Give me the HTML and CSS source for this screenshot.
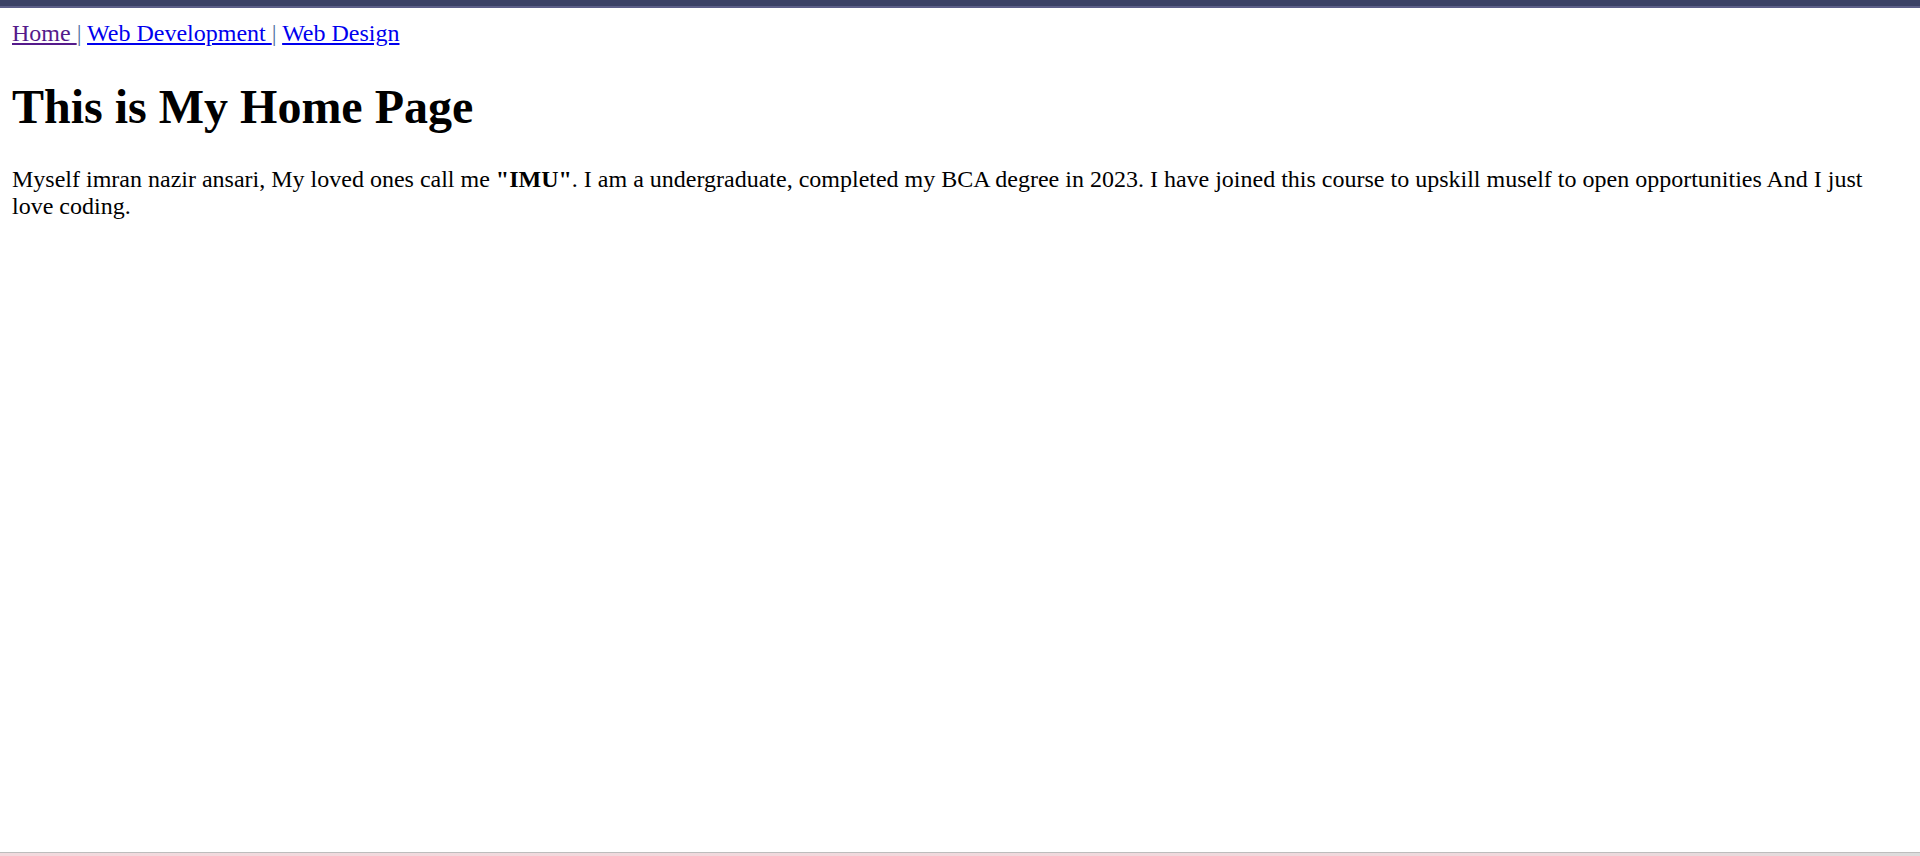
FILE: index.html
```html
<!DOCTYPE html>
<html lang="en">
<head>
<meta charset="utf-8">
<title>My Home Page</title>
<link rel="stylesheet" href="styles.css">
</head>
<body>
<div class="topbar"></div>
<main class="page">
  <nav class="nav"><a class="visited" href="#">Home </a><span class="sep">|</span> <a href="#">Web Development </a><span class="sep">|</span> <a href="#">Web Design</a></nav>
  <h1 class="title">This is My Home Page</h1>
  <p class="intro">Myself imran nazir ansari, My loved ones call me <b>"IMU"</b>. I am a undergraduate, completed my BCA degree in 2023. I have joined this course to upskill muself to open opportunities And I just love coding.</p>
</main>
<div class="bottombar"></div>
</body>
</html>
```
FILE: styles.css
```css
html, body {
  margin: 0;
  padding: 0;
  height: 100%;
  background: #ffffff;
}
body {
  display: flex;
  flex-direction: column;
  font-family: "Liberation Serif", "Times New Roman", serif;
  font-size: 24px;
  color: #000;
}
.topbar {
  height: 6px;
  background: #3b4266;
  border-bottom: 2px solid #5d6089;
  flex: none;
}
.page {
  flex: 1;
  padding: 12px;
}
.nav a {
  color: #0000ee;
  text-decoration: underline;
}
.nav a.visited {
  color: #551a8b;
}
.sep {
  color: #4f6f9f;
}
.title {
  font-size: 48px;
  font-weight: bold;
  margin: 32px 0;
}
.intro {
  margin: 0;
}
.bottombar {
  flex: none;
  height: 3px;
  border-top: 1px solid #bdbdbd;
  background: linear-gradient(to right, #f2d9dd 0%, #f0d8dc 80%, #dcdcdc 100%);
}
```
